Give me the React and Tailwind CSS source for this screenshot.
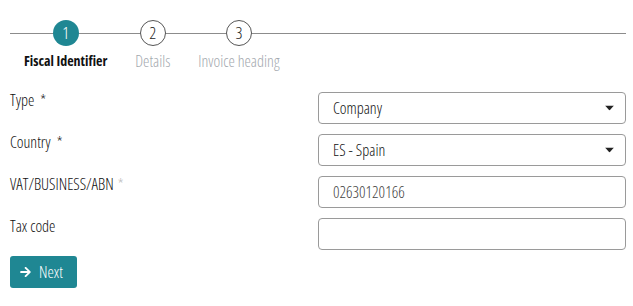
const font = { fontFamily: '"Open Sans", sans-serif', fontStretch: 'condensed' };

const steps = [
  { n: 1, label: 'Fiscal Identifier', active: true },
  { n: 2, label: 'Details' },
  { n: 3, label: 'Invoice heading' },
];

const Caret = () => (
  <svg width="9" height="5" viewBox="0 0 9 5" className="absolute right-[12px] top-1/2 -translate-y-1/2">
    <path d="M0 0h9L4.5 5z" fill="#222" />
  </svg>
);

const Row = ({ label, req, faded, children }) => (
  <div className="grid grid-cols-2 h-[32px]">
    <div className="text-[16px] font-light text-[#111] leading-none">
      {label}
      {req && <span className={faded ? 'ml-1 text-[#bbb]' : 'ml-1.5'}>*</span>}
    </div>
    <div className="relative">{children}</div>
  </div>
);

const boxCls = 'w-full h-[32px] border border-[#9a9a9a] rounded-[4px] px-[14px] flex items-center text-[16px] font-light text-[#111] bg-white';

export default function App() {
  return (
    <div className="w-[633px] h-[306px] bg-white pl-[10px] pr-[7px] pt-[20px]" style={font}>
      {/* stepper */}
      <div className="relative">
        <div className="absolute left-0 right-0 top-[13px] h-px bg-[#8c8c8c]" />
        <div className="relative flex">
          {steps.map((s) => (
            <div key={s.n} className="flex flex-col items-center px-[14px]">
              <div
                className={
                  s.active
                    ? 'w-[26px] h-[26px] rounded-full bg-[#1f8793] text-white flex items-center justify-center text-[17px] font-light'
                    : 'w-[26px] h-[26px] rounded-full bg-white border border-[#555] text-[#222] flex items-center justify-center text-[17px] font-light'
                }
              >
                {s.n}
              </div>
              <div
                className={
                  s.active
                    ? 'mt-[7px] text-[14px] font-bold text-[#111] leading-[16px]'
                    : 'mt-[7px] text-[16px] font-light text-[#a3a8ae] leading-[16px]'
                }
              >
                {s.label}
              </div>
            </div>
          ))}
        </div>
      </div>

      {/* form */}
      <div className="mt-[23px] flex flex-col gap-[10px]">
        <Row label="Type" req>
          <div className={boxCls}>Company</div>
          <Caret />
        </Row>
        <Row label="Country" req>
          <div className={boxCls}>ES - Spain</div>
          <Caret />
        </Row>
        <Row label="VAT/BUSINESS/ABN" req faded>
          <div className={boxCls + ' text-[#444]'}>02630120166</div>
        </Row>
        <Row label="Tax code">
          <div className={boxCls} />
        </Row>
      </div>

      <button className="mt-[6px] h-[32px] w-[67px] rounded-[3px] bg-[#1f8793] text-white text-[16px] font-light flex items-center pl-[10px] gap-[8px]">
        <svg width="11" height="12" viewBox="0 0 448 512" fill="currentColor">
          <path d="M190.5 66.9l22.2-22.2c9.4-9.4 24.6-9.4 33.9 0L441 239c9.4 9.4 9.4 24.6 0 33.9L246.6 467.3c-9.4 9.4-24.6 9.4-33.9 0l-22.2-22.2c-9.5-9.5-9.3-25 .4-34.3L311.4 296H24c-13.3 0-24-10.700-24-24v-32c0-13.3 10.7-24 24-24h287.4L190.9 101.2c-9.8-9.3-10-24.8-.4-34.3z" />
        </svg>
        Next
      </button>
    </div>
  );
}
